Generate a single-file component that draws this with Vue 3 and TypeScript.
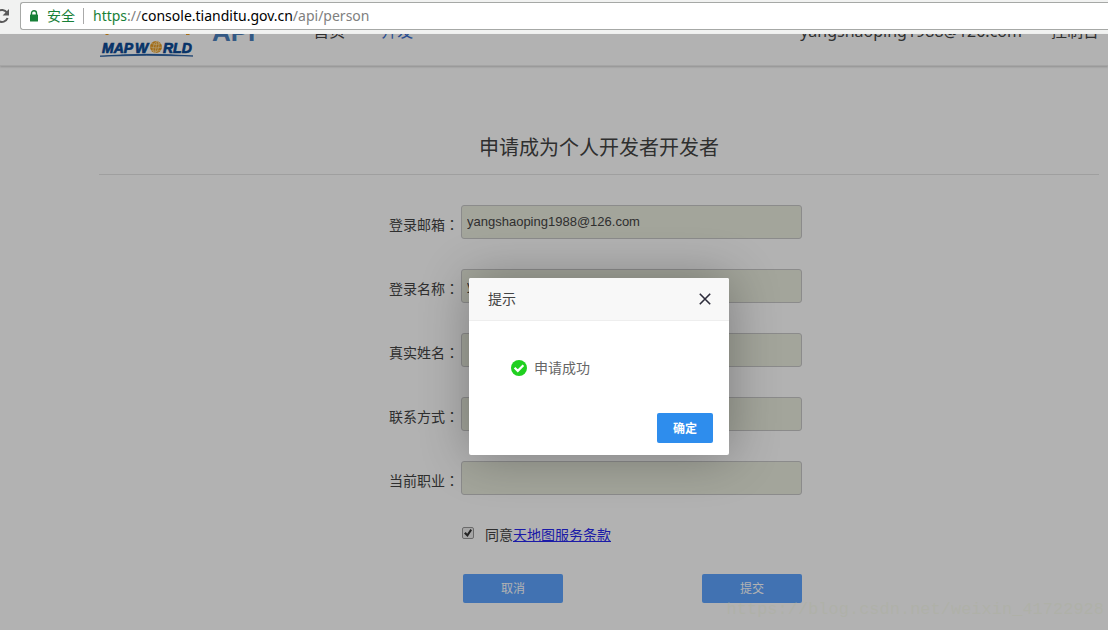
<script setup lang="ts">
import { ref } from 'vue'

interface Field {
  id: string
  label: string
  value: string
}

const fields = ref<Field[]>([
  { id: 'email', label: '登录邮箱', value: 'yangshaoping1988@126.com' },
  { id: 'login-name', label: '登录名称', value: 'y' },
  { id: 'real-name', label: '真实姓名', value: '' },
  { id: 'contact', label: '联系方式', value: '' },
  { id: 'job', label: '当前职业', value: '' },
])
const agreed = ref(true)
const dialogOpen = ref(true)
</script>

<template>
  <div class="window">
    <div class="toolbar">
      <button class="reload" type="button" aria-label="重新加载">
        <svg width="16" height="16" viewBox="0 0 16 16">
          <path d="M13 4.6A6 6 0 1 0 13.6 10" fill="none" stroke="#5a5a5a" stroke-width="2" />
          <path d="M15 1v6.4H8.6z" fill="#5a5a5a" />
        </svg>
      </button>
      <div class="omnibox">
        <svg class="lock" width="10" height="12" viewBox="0 0 10 12">
          <path d="M2.5 6V3.2a2.5 2.5 0 0 1 5 0V6" fill="none" stroke="#188038" stroke-width="1.4" />
          <rect x="1" y="4.5" width="8" height="7" rx="0.6" fill="#188038" />
        </svg>
        <span class="secure">安全</span>
        <span class="url"><span class="scheme">https</span>://<span class="host">console.tianditu.gov.cn</span>/api/person</span>
      </div>
    </div>

    <div class="page">
      <header class="site-header">
        <svg class="logo" width="96" height="24" viewBox="0 0 96 24">
          <path d="M7 1h3l-1 1H6zM87 1h4l-1 1h-3z" fill="#f0a020" />
          <g class="logo-text">
            <text x="3" y="20">MAP</text>
            <text x="36" y="20">W</text>
            <text x="64" y="20">RLD</text>
          </g>
          <circle cx="57" cy="14" r="6" fill="#e89a20" />
          <g fill="none" stroke="#ffe3a8" stroke-width="0.7">
            <ellipse cx="57" cy="14" rx="2.6" ry="6" transform="rotate(15 57 14)" />
            <path d="M51 14q6 2 12 0M52 10.5q5 2 10 0M52 17.5q5 1.6 10 0M58 8l-2 12" />
          </g>
          <path d="M1 23.2Q48 19.4 94 23Q48 21.4 1 23.2z" fill="#0b4a96" stroke="#0b4a96" stroke-width="0.7" />
        </svg>
        <span class="api">API</span>
        <nav class="nav">
          <a href="#">首页</a>
          <a href="#" class="active">开发</a>
        </nav>
        <nav class="account">
          <a href="#">yangshaoping1988@126.com</a>
          <a href="#">控制台</a>
        </nav>
      </header>

      <main class="content">
        <h1>申请成为个人开发者开发者</h1>
        <form class="form" @submit.prevent="dialogOpen = true">
          <div v-for="field in fields" :key="field.id" class="row">
            <label :for="field.id">{{ field.label }}<span class="colon">：</span></label>
            <input :id="field.id" v-model="field.value" type="text" readonly />
          </div>
          <div class="agree">
            <input id="agree" v-model="agreed" type="checkbox" />
            <label for="agree">同意<a href="#">天地图服务条款</a></label>
          </div>
          <div class="actions">
            <button type="button">取消</button>
            <button type="submit">提交</button>
          </div>
        </form>
      </main>

      <div v-if="dialogOpen" class="shade">
        <section class="dialog" role="dialog" aria-labelledby="dialog-title">
          <div class="dialog-head">
            <h2 id="dialog-title">提示</h2>
            <button class="close" type="button" aria-label="关闭" @click="dialogOpen = false">
              <svg width="12" height="12" viewBox="0 0 12 12">
                <path d="M0.8 0.8l10.4 10.4M11.2 0.8L0.8 11.2" stroke="#2d2c3b" stroke-width="1.6" />
              </svg>
            </button>
          </div>
          <div class="dialog-body">
            <svg width="16" height="16" viewBox="0 0 16 16">
              <circle cx="8" cy="8" r="8" fill="#20d020" />
              <path d="M3.6 7.8l3.2 3.1 5.6-5.6" fill="none" stroke="#fff" stroke-width="2.2" />
            </svg>
            <span>申请成功</span>
          </div>
          <div class="dialog-foot">
            <button type="button" @click="dialogOpen = false">确定</button>
          </div>
        </section>
      </div>
      <div class="watermark">https://blog.csdn.net/weixin_41722928</div>
    </div>
  </div>
</template>

<style>
body {
  margin: 0;
}
</style>

<style scoped>
* {
  box-sizing: border-box;
}
.window {
  display: flex;
  flex-direction: column;
  min-height: 100vh;
  overflow: hidden;
  font-family: "Noto Sans", "Noto Sans CJK SC", sans-serif;
  font-size: 14px;
  color: #444;
}
button {
  font-family: inherit;
  border: 0;
  padding: 0;
  cursor: pointer;
}
.toolbar {
  display: flex;
  height: 34px;
  padding: 2px 0;
  background: #f1f2f1;
}
.reload {
  flex: none;
  width: 20px;
  height: 28px;
  background: none;
}
.reload svg {
  display: block;
  margin-left: -6px;
}
.omnibox {
  display: flex;
  flex: 1;
  align-items: center;
  height: 28px;
  padding-left: 8px;
  background: #fff;
  border: 1px solid #a6a8a6;
  border-right: 0;
  border-radius: 3px 0 0 3px;
}
.secure {
  margin-left: 8px;
  padding-right: 8px;
  border-right: 1px solid #aaa;
  line-height: 16px;
  color: #188038;
}
.url {
  margin-left: 9px;
  line-height: 20px;
  padding-bottom: 1px;
  color: #808080;
  white-space: nowrap;
}
.scheme {
  color: #188038;
}
.host {
  color: #000;
}
.page {
  position: relative;
  flex: 1;
  background: #fff;
}
.site-header {
  display: flex;
  align-items: flex-end;
  height: 32px;
  padding: 0 9px 8px 99px;
  overflow: hidden;
  border-bottom: 1px solid #ececec;
  box-shadow: 0 1px 2px rgba(0, 0, 0, 0.2);
  font-size: 16px;
  line-height: 24px;
}
.site-header a {
  color: #444;
  text-decoration: none;
}
.logo {
  flex: none;
}
.logo-text {
  font: italic bold 14px "Liberation Sans", sans-serif;
  fill: #0b4a96;
  stroke: #0b4a96;
  stroke-width: 0.7;
}
.api {
  margin: 0 0 9px 17px;
  font: bold 26px/32px "Liberation Sans", sans-serif;
  color: #4a80bd;
}
.nav {
  display: flex;
  gap: 36px;
  margin: 0 auto 14px 58px;
}
.site-header .active {
  color: #3a6fd0;
}
.account {
  display: flex;
  gap: 29px;
  margin-bottom: 14px;
}
.content {
  padding: 67px 9px 24px 99px;
}
h1 {
  margin: 0;
  padding-bottom: 11px;
  border-bottom: 1px solid #e4e4e4;
  font-size: 20px;
  font-weight: 400;
  line-height: 30px;
  text-align: center;
}
.form {
  width: 420px;
  margin: 30px auto 0;
  padding-right: 7px;
}
.row {
  display: flex;
  height: 34px;
  margin-bottom: 30px;
}
.row label {
  width: 72px;
  padding-top: 6px;
  line-height: 28px;
  white-space: nowrap;
}
.colon {
  font-family: "Noto Sans CJK TC", sans-serif;
  line-height: 20px;
}
.row input {
  flex: 1;
  min-width: 0;
  height: 34px;
  padding: 0 5px 2px;
  background: #eaecdf;
  border: 1px solid #c8c8c8;
  border-radius: 3px;
  font: 13px "Liberation Sans", sans-serif;
  color: #444;
}
.agree {
  display: flex;
  gap: 11px;
  margin-left: 73px;
  line-height: 20px;
}
.agree input {
  position: relative;
  appearance: none;
  width: 12px;
  height: 12px;
  margin: 2px 0 0;
  background: #eee;
  border: 1px solid #999;
  border-radius: 2px;
}
.agree input:checked::after {
  content: "";
  position: absolute;
  inset: 1px;
  background: #333;
  clip-path: polygon(0 55%, 22% 38%, 40% 58%, 80% 0, 100% 16%, 45% 100%);
}
.agree a {
  color: #2828f0;
}
.actions {
  display: flex;
  justify-content: space-between;
  margin: 29px 0 0 74px;
}
.actions button {
  width: 100px;
  height: 29px;
  padding-bottom: 1px;
  background: #5da4ff;
  border-radius: 2px;
  font-size: 12px;
  color: #fff;
}
.shade {
  position: absolute;
  inset: 0;
  padding: 244px 9px 0 99px;
  background: rgba(0, 0, 0, 0.3);
}
.dialog {
  width: 260px;
  margin: 0 auto;
  background: #fff;
  border-radius: 2px;
  box-shadow: 1px 1px 50px rgba(0, 0, 0, 0.3);
}
.dialog-head {
  display: flex;
  align-items: center;
  justify-content: space-between;
  height: 43px;
  padding: 0 18px 0 19px;
  background: #f8f8f8;
  border-bottom: 1px solid #eee;
  border-radius: 2px 2px 0 0;
}
h2 {
  margin: 0;
  padding-bottom: 2px;
  font-size: 14px;
  font-weight: 400;
}
.close {
  background: none;
}
.close svg {
  display: block;
}
.dialog-body {
  display: flex;
  gap: 7px;
  align-items: center;
  padding: 37px 42px 35px;
  line-height: 20px;
  color: #666;
}
.dialog-foot {
  display: flex;
  justify-content: flex-end;
  padding: 0 16px 12px;
}
.dialog-foot button {
  width: 56px;
  height: 30px;
  background: #2e8ded;
  border-radius: 2px;
  font-size: 12px;
  font-weight: 700;
  color: #fff;
}
.watermark {
  position: absolute;
  right: 4px;
  bottom: 8px;
  font: 17px/24px "Liberation Mono", monospace;
  color: rgba(170, 176, 150, 0.35);
  pointer-events: none;
}
</style>
